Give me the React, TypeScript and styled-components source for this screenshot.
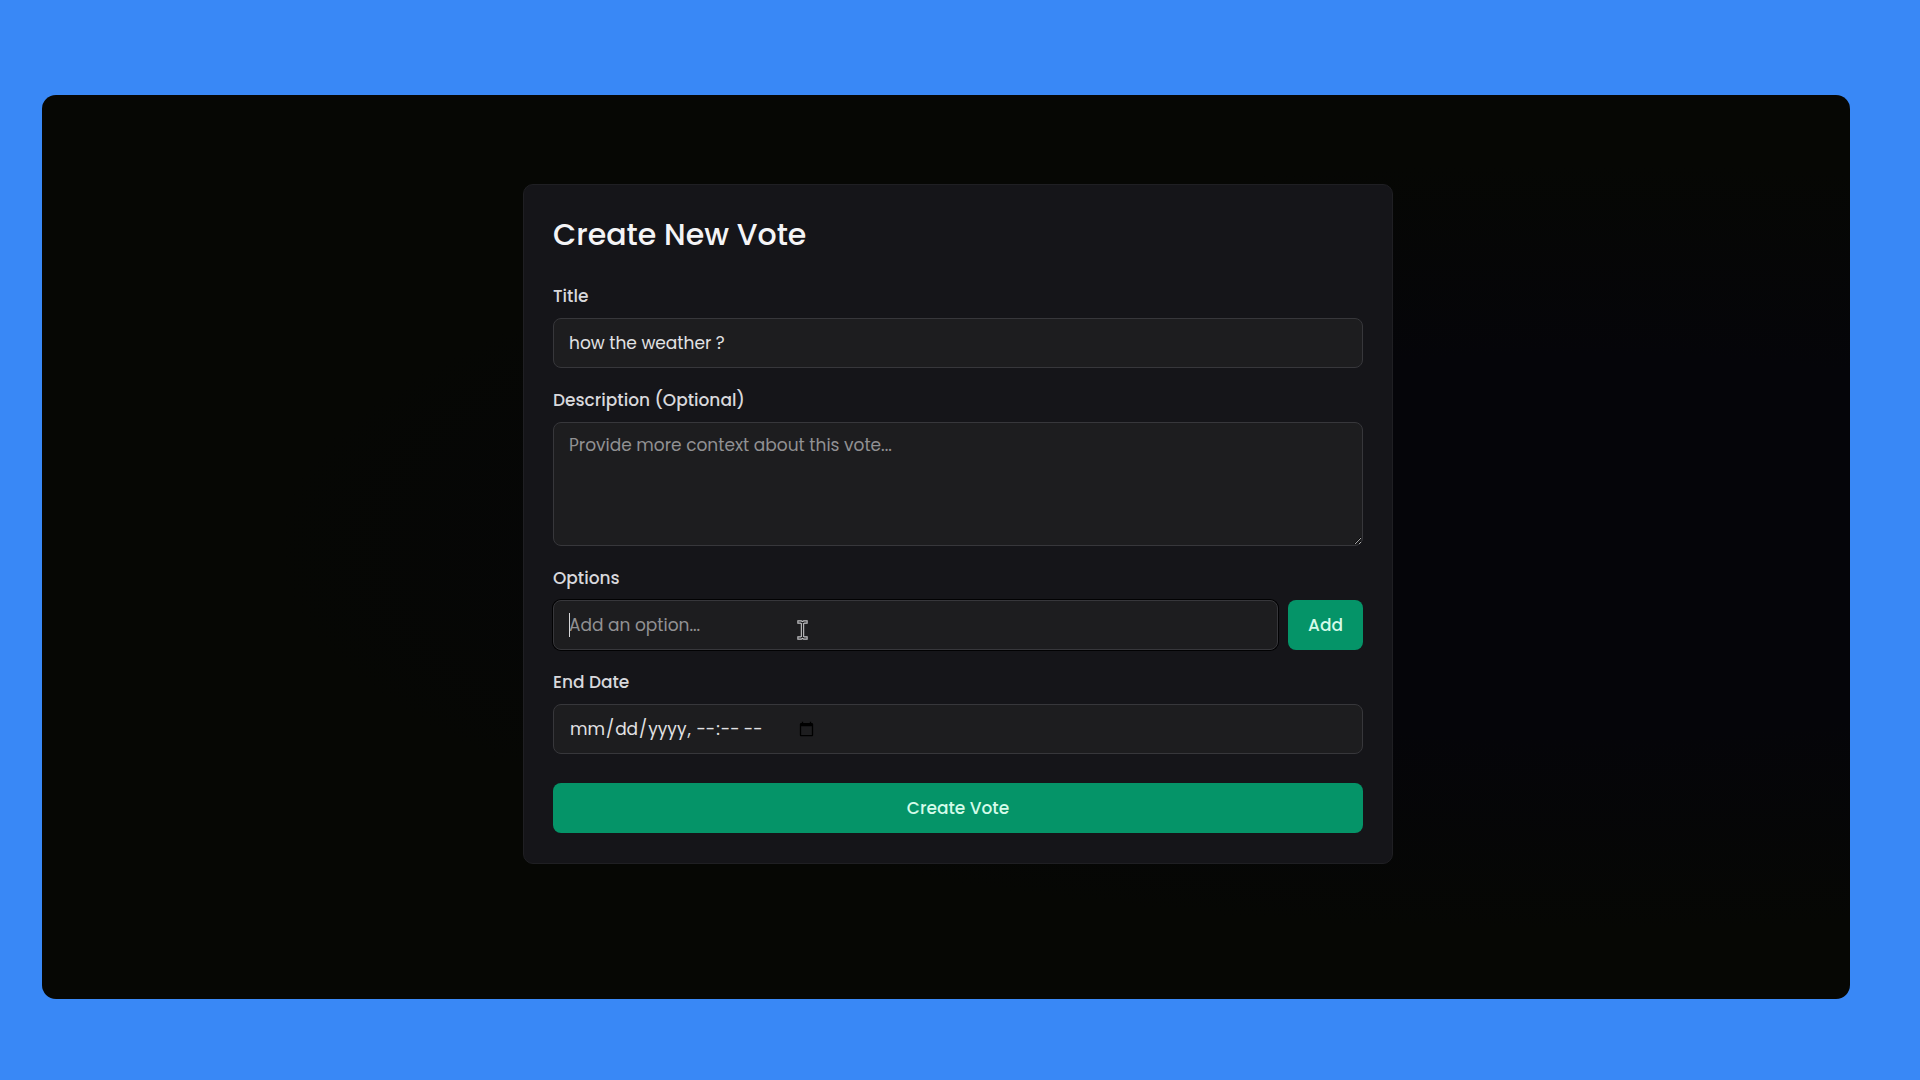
import React, { useState } from "react";
import styled, { createGlobalStyle, css } from "styled-components";

const GlobalStyle = createGlobalStyle`
  *, *::before, *::after { box-sizing: border-box; }
  body {
    margin: 0;
    background: #3988f6;
    font-family: Poppins, Inter, "Open Sans", sans-serif;
    -webkit-font-smoothing: antialiased;
  }
`;

const Page = styled.div`
  min-height: 100vh;
  display: flex;
  padding: 95px 70px 81px 42px;
`;

const Stage = styled.main`
  flex: 1;
  display: flex;
  justify-content: center;
  align-items: flex-start;
  padding: 89px 0 89px 24px;
  border-radius: 14px;
  background: radial-gradient(ellipse at 85% 50%, #050509 0%, #050509 30%, #060704 60%);
`;

const Card = styled.section`
  width: 100%;
  max-width: 870px;
  padding: 29px 29px 30px;
  border: 1px solid #1f1f23;
  border-radius: 10px;
  background: #151519;
`;

const Heading = styled.h1`
  margin: 0 0 28px;
  font-size: 30px;
  line-height: 42px;
  font-weight: 500;
  color: #f4f4f6;
`;

const Form = styled.form`
  display: flex;
  flex-direction: column;
  gap: 20px;
`;

const Field = styled.div`
  display: flex;
  flex-direction: column;
  gap: 10px;
`;

const Label = styled.label`
  font-size: 17px;
  line-height: 24px;
  font-weight: 500;
  color: #d8d8dc;
`;

const control = css`
  width: 100%;
  margin: 0;
  padding: 0 15px;
  border: 1px solid #37373b;
  border-radius: 8px;
  outline: none;
  background: #1d1d1f;
  color: #e2e2e4;
  font-family: inherit;
  font-size: 17px;
  line-height: 24px;

  &::placeholder {
    color: #919193;
    opacity: 1;
  }
`;

const TextInput = styled.input`
  ${control}
  height: 50px;
`;

const OptionInput = styled(TextInput)`
  display: block;
  caret-color: transparent;

  &:focus {
    box-shadow: 0 0 0 1px #020203;
  }
`;

const DateInput = styled(TextInput)`
  display: flex;
  align-items: center;
`;

const TextArea = styled.textarea`
  ${control}
  display: block;
  height: 124px;
  padding: 10px 15px;
  resize: vertical;
`;

const Row = styled.div`
  display: flex;
  gap: 10px;
`;

const OptionBox = styled.div`
  position: relative;
  flex: 1;
`;

const Caret = styled.span`
  position: absolute;
  left: 16px;
  top: 13px;
  width: 1px;
  height: 24px;
  background: #d6d6d8;
  pointer-events: none;
`;

const Pointer = styled.svg`
  position: absolute;
  left: 244px;
  top: 19px;
  width: 11px;
  height: 22px;
  pointer-events: none;
`;

const Button = styled.button<{ $wide?: boolean }>`
  height: 50px;
  width: ${(p) => (p.$wide ? "100%" : "75px")};
  margin: ${(p) => (p.$wide ? "9px 0 0" : "0")};
  padding: 0;
  border: 0;
  border-radius: 8px;
  background: #059468;
  color: #d4fbe9;
  font-family: inherit;
  font-size: 17px;
  line-height: 24px;
  font-weight: 500;
  cursor: pointer;
`;

export default function App() {
  const [title, setTitle] = useState("how the weather ?");

  return (
    <>
      <GlobalStyle />
      <Page>
        <Stage>
          <Card>
            <Heading>Create New Vote</Heading>
            <Form onSubmit={(e) => e.preventDefault()}>
              <Field>
                <Label htmlFor="title">Title</Label>
                <TextInput id="title" value={title} onChange={(e) => setTitle(e.target.value)} />
              </Field>
              <Field>
                <Label htmlFor="description">Description (Optional)</Label>
                <TextArea id="description" placeholder="Provide more context about this vote..." />
              </Field>
              <Field>
                <Label htmlFor="option">Options</Label>
                <Row>
                  <OptionBox>
                    <OptionInput id="option" placeholder="Add an option..." autoFocus />
                    <Caret />
                    <Pointer viewBox="0 0 11 22" fill="none" aria-hidden="true">
                      <path
                        d="M2 3H4L5.5 4L7 3H9M5.5 4V18M2 19H4L5.5 18L7 19H9"
                        stroke="#c4c4c6"
                        strokeWidth="3.4"
                        strokeLinecap="square"
                      />
                      <path
                        d="M2 3H4L5.5 4L7 3H9M5.5 4V18M2 19H4L5.5 18L7 19H9"
                        stroke="#1a1a1c"
                        strokeWidth="1.2"
                        strokeLinecap="square"
                      />
                    </Pointer>
                  </OptionBox>
                  <Button type="button">Add</Button>
                </Row>
              </Field>
              <Field>
                <Label htmlFor="end-date">End Date</Label>
                <DateInput id="end-date" type="datetime-local" />
              </Field>
              <Button type="submit" $wide>
                Create Vote
              </Button>
            </Form>
          </Card>
        </Stage>
      </Page>
    </>
  );
}
